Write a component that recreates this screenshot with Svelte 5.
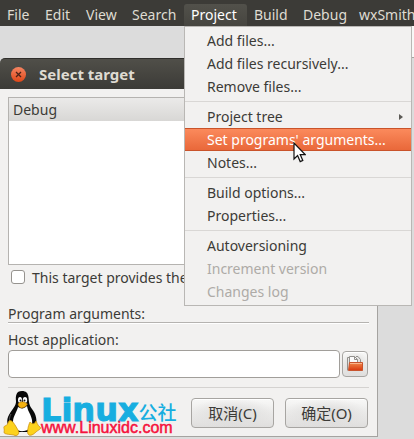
<script>
  const menus = ['File', 'Edit', 'View', 'Search', 'Project', 'Build', 'Debug', 'wxSmith'];
  const groups = [
    [{ label: 'Add files...' }, { label: 'Add files recursively...' }, { label: 'Remove files...' }],
    [
      { label: 'Project tree', submenu: true },
      { label: "Set programs' arguments...", active: true },
      { label: 'Notes...' }
    ],
    [{ label: 'Build options...' }, { label: 'Properties...' }],
    [
      { label: 'Autoversioning' },
      { label: 'Increment version', disabled: true },
      { label: 'Changes log', disabled: true }
    ]
  ];
</script>

<div class="screen">
  <nav class="menubar">
    {#each menus as menu}
      <div class="entry">
        <button class="top" class:open={menu === 'Project'}>{menu}</button>
        {#if menu === 'Project'}
          <div class="dropdown" role="menu">
            {#each groups as group}
              <div class="group">
                {#each group as item}
                  <button role="menuitem" class="item" class:active={item.active} disabled={item.disabled}>
                    <span>{item.label}</span>
                    {#if item.submenu}
                      <svg width="4" height="6" viewBox="0 0 4 6"><path d="M0 0L4 3L0 6Z" fill="#5c5a56" /></svg>
                    {/if}
                    {#if item.active}
                      <svg class="pointer" width="13" height="21" viewBox="0 0 13 21">
                        <path d="M1 1V17L4.600 13.600L7.200 19.600L9.800 18.400L7.200 12.600H12.200Z" fill="#fff" stroke="#111" stroke-width="1.200" />
                      </svg>
                    {/if}
                  </button>
                {/each}
              </div>
            {/each}
          </div>
        {/if}
      </div>
    {/each}
  </nav>
  <div class="toolbar"><div class="panel"></div></div>

  <section class="dialog" aria-labelledby="title">
    <header>
      <button class="close" aria-label="Close">
        <svg width="15" height="15" viewBox="0 0 15 15"><path d="M5 5L10 10M10 5L5 10" stroke="#4a2318" stroke-width="1.300" /></svg>
      </button>
      <h1 id="title">Select target</h1>
    </header>
    <div class="body">
      <ul class="targets"><li>Debug</li></ul>
      <label class="check"><input type="checkbox" /><span>This target provides the</span></label>
      <label class="caption" for="args">Program arguments:</label>
      <input id="args" class="collapsed" type="text" />
      <label class="caption" for="host">Host application:</label>
      <div class="host">
        <input id="host" type="text" />
        <button class="browse" aria-label="Browse">
          <svg width="18" height="18" viewBox="0 0 18 18">
            <defs>
              <linearGradient id="folder" x1="0" y1="0" x2="0" y2="1">
                <stop offset="0" stop-color="#f28a4c" /><stop offset="1" stop-color="#d8380e" />
              </linearGradient>
            </defs>
            <path d="M1.500 15.500V2.500H4" fill="none" stroke="#92908c" />
            <path d="M3.500 14V1.500H8.500L11.500 4.500V9" fill="#fafafa" stroke="#92908c" />
            <path d="M8.500 1.500V4.500H11.500M10 1.500H12L14.500 4.500V7" fill="none" stroke="#92908c" />
            <path d="M3.500 7.500H16.500V15.500H2.500Z" fill="url(#folder)" stroke="#c8542e" />
            <path d="M4 8.500H16" stroke="#f9b58c" />
          </svg>
        </button>
      </div>
      <footer>
        <button>取消(C)</button>
        <button>确定(O)</button>
      </footer>
    </div>

    <div class="brand">
      <svg width="38" height="46" viewBox="0 0 38 46">
        <path d="M19 1C13 1 12.500 6 13 11C13.500 16 8 20 5 27C3 33 5 36 9 38L14 42H26L32 37C35 31 33 24 29 19C26 15 26 12 25.500 7C25 3 23 1 19 1Z" fill="#080808" />
        <path d="M15 17C14 22 10 26 10 32C10 38 15 42 21 41C27 40 30 36 29 30C28 24 25 22 24 16C21 19 18 19 15 17Z" fill="#fff" />
        <path d="M8 24C6 28 6 31 8 34" stroke="#555" fill="none" />
        <ellipse cx="17" cy="10" rx="2" ry="3" fill="#fff" />
        <ellipse cx="22" cy="10" rx="2.200" ry="3" fill="#fff" />
        <circle cx="17.500" cy="10.500" r="1" fill="#111" />
        <circle cx="21.500" cy="10.500" r="1" fill="#111" />
        <path d="M15 14C17 11 21 11 24.500 14C23 17 20 18 18.500 18C17 18 15 16 15 14Z" fill="#f4b211" stroke="#a66a05" stroke-width=".5" />
        <path d="M6 31C4 34 5 35 2 36C-.5 37 2 39 1 42C.5 45 9 44 12 45.500C15 46 17 43 15 40C12 35 9 29 6 31Z" fill="#fcd21d" stroke="#c98a08" stroke-width=".7" />
        <path d="M27 32C25 36 24 42 25 44C27 47 31 44 33 42C35 40 39 39 37 37C34 35 34 32 33 31C31 35 29 34 27 32Z" fill="#fcd21d" stroke="#c98a08" stroke-width=".7" />
      </svg>
      <div class="words">
        <div class="name"><b>Linux</b><span>公社</span></div>
        <div class="site">www.Linuxidc.com</div>
      </div>
    </div>
  </section>
</div>

<style>
  :global(body) {
    margin: 0;
    background: #dcdcdc;
  }
  .screen {
    min-height: 100vh;
    overflow: hidden;
    font: 14px/23px 'Noto Sans', 'Noto Sans CJK SC', sans-serif;
    color: #3c3b37;
  }
  button,
  input {
    box-sizing: border-box;
    margin: 0;
    font: inherit;
    color: inherit;
  }
  .menubar {
    display: grid;
    grid-template-columns: 38px 41px 46px 59px 63px 49px 56px auto;
    height: 26px;
    background: #3c3b37;
  }
  .entry {
    position: relative;
    padding-top: 4px;
  }
  .top {
    display: block;
    width: 100%;
    height: 22px;
    padding: 0 0 0 7px;
    border: 0;
    border-radius: 3px 3px 0 0;
    background: none;
    line-height: 22px;
    text-align: left;
    color: #dfdbd2;
  }
  .top.open {
    background: linear-gradient(#52514b, #464540);
    color: #fff;
  }
  .dropdown {
    position: absolute;
    z-index: 2;
    top: 100%;
    left: 0;
    box-sizing: border-box;
    width: 228px;
    padding: 2px 0;
    border: 1px solid #b9b7b4;
    background: #f2f1f0;
  }
  .group + .group {
    padding-top: 7px;
    background: linear-gradient(#d9d7d5, #d9d7d5) 0 3px / 100% 1px no-repeat;
  }
  .item {
    position: relative;
    display: flex;
    align-items: center;
    justify-content: space-between;
    width: 100%;
    height: 23px;
    padding: 0 8px 0 22px;
    border: 0;
    background: none;
    white-space: nowrap;
  }
  .item:disabled {
    color: #aeaba7;
  }
  .item.active {
    border: solid #c9532a;
    border-width: 1px 0;
    background: linear-gradient(#fb8a5c, #e9683a);
    line-height: 21px;
    color: #fff;
  }
  .pointer {
    position: absolute;
    top: 13px;
    left: 108px;
    z-index: 1;
  }
  .toolbar {
    display: flex;
    justify-content: flex-end;
    height: 32px;
    background: #dcdcdc;
  }
  .panel {
    box-sizing: border-box;
    width: 20px;
    border-bottom: 1px solid #a5a3a0;
    background: #f8f8f7;
  }
  .dialog {
    position: relative;
    box-sizing: border-box;
    margin-right: 36px;
    border: solid #a5a3a0;
    border-width: 0 1px 1px 0;
    border-radius: 5px 0 0 0;
    background: #f2f1f0;
  }
  header {
    display: flex;
    align-items: center;
    gap: 13px;
    box-sizing: border-box;
    height: 31px;
    padding-left: 11px;
    border-top: 1px solid #2f2e2b;
    border-radius: 5px 0 0 0;
    background: linear-gradient(#504f49, #3c3b37);
  }
  h1 {
    margin: 0;
    font-size: 15px;
    color: #dfdbd2;
  }
  .close {
    display: flex;
    width: 15px;
    height: 15px;
    padding: 0;
    border: 0;
    border-radius: 50%;
    background: linear-gradient(#f58562, #df4718);
  }
  .body {
    padding: 8px;
  }
  .targets {
    box-sizing: border-box;
    height: 168px;
    margin: 0;
    padding: 0;
    border: 1px solid #b5b3b0;
    background: #fff;
    list-style: none;
  }
  .targets li {
    padding-left: 4px;
    background: linear-gradient(#ebeae9, #d8d7d5);
    color: #3c3b37;
  }
  .check {
    display: flex;
    align-items: center;
    gap: 7px;
    height: 24px;
    padding-left: 3px;
  }
  .check input {
    flex: none;
    appearance: none;
    width: 14px;
    height: 14px;
    border: 1px solid #96938f;
    border-radius: 3px;
    background: #fff;
  }
  .caption {
    display: block;
    line-height: 20px;
  }
  .check + .caption {
    margin-top: 15px;
  }
  .collapsed {
    display: block;
    width: 100%;
    height: 2px;
    margin: -2px 0 6px;
    padding: 0;
    border: 0;
    border-top: 1px solid #b5b3b0;
    background: #fff;
  }
  .host {
    display: flex;
    align-items: center;
    gap: 2px;
    padding-right: 1px;
  }
  .host input {
    flex: 1;
    min-width: 0;
    height: 28px;
    padding: 0 6px;
    border: 1px solid #a19e9a;
    border-radius: 4px;
    background: #fff;
  }
  .browse,
  footer button {
    border: 1px solid #a7a5a2;
    border-radius: 4px;
    background: radial-gradient(ellipse at center, #dcdbda, transparent 75%), linear-gradient(#f8f8f7, #dfdedd);
    box-shadow: inset 0 1px #fff;
  }
  .browse {
    display: grid;
    place-items: center;
    width: 26px;
    height: 26px;
    padding: 0;
  }
  footer {
    display: flex;
    justify-content: flex-end;
    gap: 11px;
    margin-top: 9px;
    padding: 10px 1px 0 0;
    border-top: 1px solid #d4d2d0;
  }
  footer button {
    width: 83px;
    height: 30px;
    padding: 0;
    font-size: 15px;
  }
  .brand {
    position: absolute;
    bottom: 0;
    left: 3px;
    display: flex;
    height: 46px;
  }
  .words {
    display: flex;
    flex-direction: column;
    justify-content: flex-end;
  }
  .name {
    display: flex;
    align-items: flex-end;
    height: 28px;
    margin-bottom: -4px;
    color: #17aee0;
  }
  .name b {
    font: bold 32px/28px 'DejaVu Sans', sans-serif;
    -webkit-text-stroke: 1px #17aee0;
  }
  .name span {
    font: 500 19px/24px 'Noto Sans CJK SC', sans-serif;
  }
  .site {
    font: 16px/16px 'Liberation Sans', sans-serif;
    color: #f5123d;
    -webkit-text-stroke: 0.5px #f5123d;
  }
</style>
